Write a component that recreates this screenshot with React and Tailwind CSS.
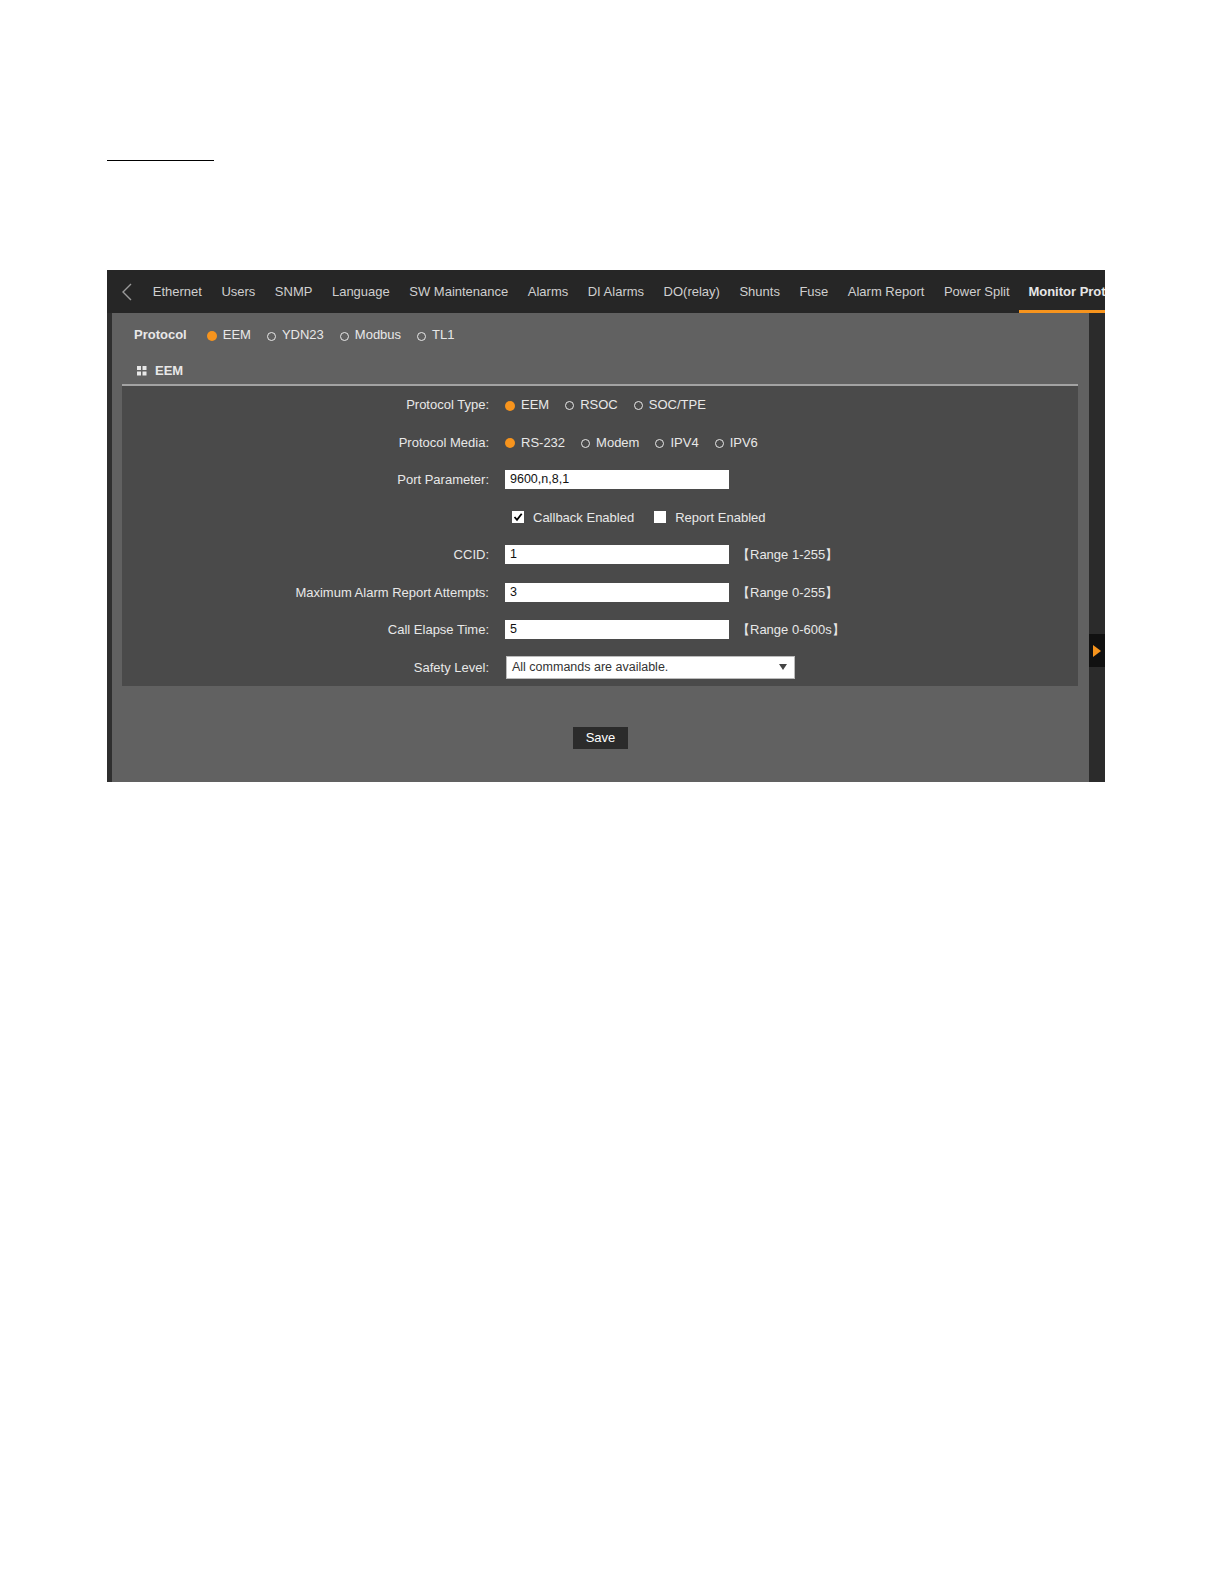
import React from "react";

const tabs = ["Ethernet","Users","SNMP","Language","SW Maintenance","Alarms","DI Alarms","DO(relay)","Shunts","Fuse","Alarm Report","Power Split"];

function Radio({ checked, label, className = "" }) {
  return (
    <div className={"flex items-center " + className}>
      {checked ? (
        <span className="w-[10px] h-[10px] rounded-full bg-[#f7941d] mr-[6px] mt-[2px]"></span>
      ) : (
        <span className="w-[9px] h-[9px] rounded-full border-[1.5px] border-[#e8e8e8] mr-[6px] mt-[2px]"></span>
      )}
      <span>{label}</span>
    </div>
  );
}

function Row({ label, children }) {
  return (
    <div className="h-[37.5px] flex items-center">
      <div className="w-[367px] text-right pr-0 text-[#e8e8e8]">{label}</div>
      <div className="ml-[16px] flex items-center text-[#e8e8e8]">{children}</div>
    </div>
  );
}

function Input({ value }) {
  return (
    <div className="w-[224px] h-[19px] bg-white text-[#111] text-[12.5px] leading-[19px] pl-[5px]">{value}</div>
  );
}

function Range({ text }) {
  return <span className="ml-[8px] text-[#e8e8e8]">{text}</span>;
}

export default function App() {
  return (
    <div className="w-[1224px] h-[1584px] bg-white relative" style={{ fontFamily: '"Liberation Sans", Arial, sans-serif' }}>
      <div className="pt-[160px] pl-[107px]">
        <div className="w-[107px] border-b-[1.5px] border-black"></div>
      </div>
      <div className="ml-[107px] mt-[109px] w-[998px] text-[13px]">
        {/* nav */}
        <div className="h-[43px] bg-[#262626] flex items-stretch overflow-hidden">
          <div className="w-[36px] flex items-center justify-center shrink-0">
            <svg width="12" height="18" viewBox="0 0 12 18" className="ml-[4px]">
              <path d="M10 1 L2 9 L10 17" fill="none" stroke="#9a9a9a" strokeWidth="1.4" />
            </svg>
          </div>
          {tabs.map((t) => (
            <div key={t} className="px-[9.75px] flex items-center text-[#cfcfcf] whitespace-nowrap shrink-0">{t}</div>
          ))}
          <div className="px-[9px] flex items-center text-[#e6e6e6] font-bold whitespace-nowrap shrink-0 border-b-[3px] border-[#f7941d] pt-[3px]">Monitor Protocol</div>
        </div>
        {/* body */}
        <div className="flex h-[469px]">
          <div className="w-[5px] bg-[#2f2f2f]"></div>
          <div className="flex-1 bg-[#616161] flex flex-col">
            <div className="h-[44px] flex items-center pl-[22px] text-[#e8e8e8]">
              <span className="font-bold mr-[20px]">Protocol</span>
              <Radio checked label="EEM" className="mr-[16px]" />
              <Radio label="YDN23" className="mr-[16px]" />
              <Radio label="Modbus" className="mr-[16px]" />
              <Radio label="TL1" />
            </div>
            <div className="mx-[10px] mr-[11px]">
              <div className="h-[27px] flex items-center pl-[15px] text-[#e8e8e8] font-bold">
                <svg width="10" height="10" viewBox="0 0 10 10" className="mr-[8px]">
                  <rect x="0" y="0" width="4" height="4" fill="#e8e8e8" />
                  <rect x="5.5" y="0" width="4" height="4" fill="#e8e8e8" />
                  <rect x="0" y="5.5" width="4" height="4" fill="#e8e8e8" />
                  <rect x="5.5" y="5.5" width="4" height="4" fill="#e8e8e8" />
                </svg>
                EEM
              </div>
              <div className="h-[2px] bg-[#a3a3a3]"></div>
              <div className="bg-[#4a4a4a]">
                <Row label="Protocol Type:">
                  <Radio checked label="EEM" className="mr-[16px]" />
                  <Radio label="RSOC" className="mr-[16px]" />
                  <Radio label="SOC/TPE" />
                </Row>
                <Row label="Protocol Media:">
                  <Radio checked label="RS-232" className="mr-[16px]" />
                  <Radio label="Modem" className="mr-[16px]" />
                  <Radio label="IPV4" className="mr-[16px]" />
                  <Radio label="IPV6" />
                </Row>
                <Row label="Port Parameter:">
                  <Input value="9600,n,8,1" />
                </Row>
                <Row label="">
                  <div className="flex items-center ml-[7px]">
                    <span className="w-[12px] h-[12px] bg-white flex items-center justify-center mr-[9px]">
                      <svg width="10" height="10" viewBox="0 0 10 10">
                        <path d="M1.5 5 L4 7.8 L8.7 1.8" fill="none" stroke="#000" strokeWidth="1.8" />
                      </svg>
                    </span>
                    <span className="mr-[20px]">Callback Enabled</span>
                    <span className="w-[12px] h-[12px] bg-white mr-[9px]"></span>
                    <span>Report Enabled</span>
                  </div>
                </Row>
                <Row label="CCID:">
                  <Input value="1" />
                  <Range text="【Range 1-255】" />
                </Row>
                <Row label="Maximum Alarm Report Attempts:">
                  <Input value="3" />
                  <Range text="【Range 0-255】" />
                </Row>
                <Row label="Call Elapse Time:">
                  <Input value="5" />
                  <Range text="【Range 0-600s】" />
                </Row>
                <Row label="Safety Level:">
                  <div className="w-[289px] h-[23px] bg-white border border-[#bbb] flex items-center justify-between pl-[5px] pr-[7px] ml-[1px] text-[#333] text-[12.5px]">
                    <span>All commands are available.</span>
                    <svg width="8" height="6" viewBox="0 0 8 6"><path d="M0 0 L8 0 L4 6 Z" fill="#444" /></svg>
                  </div>
                </Row>
              </div>
            </div>
            <div className="flex justify-center mt-[41px]">
              <div className="w-[55px] h-[22px] bg-[#2b2b2b] text-white flex items-center justify-center">Save</div>
            </div>
          </div>
          <div className="w-[16px] bg-[#2b2b2b] flex flex-col">
            <div className="h-[321px]"></div>
            <div className="h-[33px] bg-[#111] flex items-center justify-center">
              <svg width="8" height="12" viewBox="0 0 8 12"><path d="M0 0 L8 6 L0 12 Z" fill="#f7941d" /></svg>
            </div>
          </div>
        </div>
      </div>
    </div>
  );
}
